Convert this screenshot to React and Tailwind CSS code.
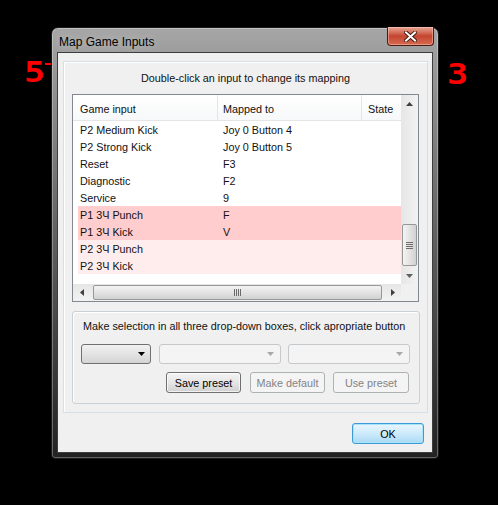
import React from 'react';

const rows = [
  { input: 'P2 Medium Kick', mapped: 'Joy 0 Button 4', bg: 'bg-white' },
  { input: 'P2 Strong Kick', mapped: 'Joy 0 Button 5', bg: 'bg-white' },
  { input: 'Reset', mapped: 'F3', bg: 'bg-white' },
  { input: 'Diagnostic', mapped: 'F2', bg: 'bg-white' },
  { input: 'Service', mapped: '9', bg: 'bg-white' },
  { input: 'P1 3Ч Punch', mapped: 'F', bg: 'bg-[#ffcdcd]' },
  { input: 'P1 3Ч Kick', mapped: 'V', bg: 'bg-[#ffcdcd]' },
  { input: 'P2 3Ч Punch', mapped: '', bg: 'bg-[#ffeded]' },
  { input: 'P2 3Ч Kick', mapped: '', bg: 'bg-[#ffeded]' },
];

// small scrollbar / combo arrows
function Tri({ dir, color = '#3f3f3f' }) {
  if (dir === 'up') return <svg width="7" height="4"><polygon points="3.5,0 7,4 0,4" fill={color} /></svg>;
  if (dir === 'down') return <svg width="7" height="4"><polygon points="0,0 7,0 3.5,4" fill={color} /></svg>;
  if (dir === 'left') return <svg width="4" height="7"><polygon points="4,0 4,7 0,3.5" fill={color} /></svg>;
  return <svg width="4" height="7"><polygon points="0,0 4,3.5 0,7" fill={color} /></svg>;
}

function CloseButton() {
  return (
    <div className="ml-auto -mt-px mr-[4px] w-[47px] h-[19px] rounded-b-[4px] border border-t-0 border-[#4a1b12] bg-gradient-to-b from-[#e8a899] via-[#c5442f] to-[#d66a51] shadow-[inset_0_0_0_1px_rgba(255,210,200,0.45)] flex items-center justify-center">
      <svg width="13" height="11" viewBox="0 0 13 11">
        <path d="M2 1.5 L11 9.5 M11 1.5 L2 9.5" stroke="#3a1510" strokeWidth="3.8" strokeLinecap="square" />
        <path d="M2 1.5 L11 9.5 M11 1.5 L2 9.5" stroke="#ffffff" strokeWidth="2" strokeLinecap="square" />
      </svg>
    </div>
  );
}

function Combo({ enabled, width }) {
  if (enabled) {
    return (
      <div className={`${width} h-[20px] rounded-[3px] border border-[#707070] bg-gradient-to-b from-[#f2f2f2] to-[#d4d4d4] flex items-center justify-end pr-[5px]`}>
        <Tri dir="down" color="#000000" />
      </div>
    );
  }
  return (
    <div className={`${width} h-[20px] rounded-[3px] border border-[#c5c9cc] bg-[#f4f4f4] flex items-center justify-end pr-[6px]`}>
      <Tri dir="down" color="#a8a8a8" />
    </div>
  );
}

function Button({ label, enabled, width }) {
  if (enabled) {
    return (
      <div className={`${width} h-[21px] rounded-[3px] border border-[#707070] bg-gradient-to-b from-[#f4f4f4] via-[#e6e6e6] to-[#d0d0d0] shadow-[inset_0_0_0_1px_rgba(255,255,255,0.7)] flex items-center justify-center text-[#000]`}>
        {label}
      </div>
    );
  }
  return (
    <div className={`${width} h-[21px] rounded-[3px] border border-[#adb2b5] bg-[#f4f4f4] flex items-center justify-center text-[#838383]`}>
      {label}
    </div>
  );
}

function ListView() {
  return (
    <div className="ml-[8px] mt-[9px] w-[347px] h-[208px] border border-[#828790] bg-white flex flex-col">
      <div className="flex h-[189px]">
        <div className="w-[328px] flex flex-col">
          <div className="h-[26px] flex border-b border-[#e5e5e5] bg-gradient-to-b from-white to-[#f7f8f9]">
            <div className="w-[145px] border-r border-[#e5e5e5] pl-[7px] pt-[3px] flex items-center">Game input</div>
            <div className="w-[144px] border-r border-[#e5e5e5] pl-[5px] pt-[3px] flex items-center">Mapped to</div>
            <div className="flex-1 pl-[6px] pt-[3px] flex items-center">State</div>
          </div>
          {rows.map((r) => (
            <div key={r.input} className={`ml-[5px] h-[17px] flex items-center ${r.bg}`}>
              <div className="w-[140px] pl-[2px] whitespace-nowrap">{r.input}</div>
              <div className="w-[143px] pl-[5px] whitespace-nowrap">{r.mapped}</div>
              <div className="flex-1"></div>
            </div>
          ))}
        </div>
        {/* vertical scrollbar */}
        <div className="w-[17px] flex flex-col bg-gradient-to-r from-[#e6e6e6] to-[#f2f2f2]">
          <div className="h-[17px] flex items-center justify-center"><Tri dir="up" /></div>
          <div className="flex-1 flex flex-col">
            <div className="mt-[112px] ml-px w-[15px] h-[42px] rounded-[2px] border border-[#979797] bg-gradient-to-r from-[#f4f4f4] via-[#e3e3e3] to-[#d1d1d1] flex flex-col items-center justify-center gap-[1px]">
              <div className="w-[7px] h-px bg-[#6b6b6b]" />
              <div className="w-[7px] h-px bg-[#6b6b6b]" />
              <div className="w-[7px] h-px bg-[#6b6b6b]" />
              <div className="w-[7px] h-px bg-[#6b6b6b]" />
            </div>
          </div>
          <div className="h-[17px] flex items-center justify-center"><Tri dir="down" color="#606060" /></div>
        </div>
      </div>
      {/* horizontal scrollbar */}
      <div className="flex h-[17px]">
        <div className="w-[328px] flex bg-gradient-to-b from-[#e6e6e6] to-[#f2f2f2]">
          <div className="w-[17px] flex items-center justify-center"><Tri dir="left" /></div>
          <div className="flex-1 flex items-center">
            <div className="ml-[3px] w-[289px] h-[15px] rounded-[2px] border border-[#979797] bg-gradient-to-b from-[#f4f4f4] via-[#e3e3e3] to-[#d1d1d1] flex items-center justify-center gap-[1px]">
              <div className="w-px h-[7px] bg-[#6b6b6b]" />
              <div className="w-px h-[7px] bg-[#6b6b6b]" />
              <div className="w-px h-[7px] bg-[#6b6b6b]" />
              <div className="w-px h-[7px] bg-[#6b6b6b]" />
            </div>
          </div>
          <div className="w-[17px] flex items-center justify-center"><Tri dir="right" /></div>
        </div>
        <div className="w-[17px] bg-[#f0f0f0]" />
      </div>
    </div>
  );
}

export default function App() {
  return (
    <div className="relative w-[498px] h-[505px] bg-black overflow-hidden text-[10.8px] leading-[14px] text-[#111] [font-family:'Liberation_Sans',Arial,sans-serif]">
      {/* game screen behind the dialog */}
      <span className="absolute left-[24px] top-[56px] text-[28px] leading-[34px] font-bold text-[#ff0000] scale-x-[1.25] origin-left [font-family:'DejaVu_Sans_Mono',monospace]">5</span>
      <div className="absolute left-[45px] top-[63px] w-[6px] h-[2px] bg-[#ff0000]" />
      <span className="absolute left-[447px] top-[58px] text-[28px] leading-[34px] font-bold text-[#ff0000] scale-x-[1.25] origin-left [font-family:'DejaVu_Sans_Mono',monospace]">3</span>

      {/* dialog window */}
      <div className="absolute left-[51px] top-[27px] w-[388px] h-[432px] rounded-t-[7px] rounded-b-[4px] border border-[#1a1a1a] bg-gradient-to-b from-[#a6a6a6] via-[#5e5e5e] to-[#222222] shadow-[inset_0_0_0_1px_rgba(255,255,255,0.3)] flex flex-col">
        <div className="h-[24px] flex items-start">
          <div className="ml-[7px] mt-[7px] text-[12px] text-black [text-shadow:0_0_8px_rgba(255,255,255,0.55)]">Map Game Inputs</div>
          <CloseButton />
        </div>

        <div className="ml-[5px] w-[376px] h-[401px] border border-[#3e3e3e] bg-[#f0f0f0] flex flex-col">
          {/* inner panel */}
          <div className="ml-[5px] mt-[8px] w-[365px] h-[352px] border border-[#d5dfe5] shadow-[inset_1px_1px_0_#ffffff] flex flex-col">
            <div className="mt-[9px] text-center">Double-click an input to change its mapping</div>
            <ListView />

            <div className="ml-[8px] mt-[9px] w-[348px] h-[93px] rounded-[3px] border border-[#c9d1d6] shadow-[inset_1px_1px_0_#ffffff] flex flex-col">
              <div className="mt-[7px] pl-[10px] whitespace-nowrap">Make selection in all three drop-down boxes, click apropriate button</div>
              <div className="mt-[11px] ml-[8px] flex">
                <Combo enabled width="w-[70px]" />
                <div className="w-[8px]" />
                <Combo width="w-[122px]" />
                <div className="w-[7px]" />
                <Combo width="w-[122px]" />
              </div>
              <div className="mt-[8px] ml-[93px] flex">
                <Button enabled label="Save preset" width="w-[75px]" />
                <div className="w-[9px]" />
                <Button label="Make default" width="w-[75px]" />
                <div className="w-[8px]" />
                <Button label="Use preset" width="w-[76px]" />
              </div>
            </div>
          </div>

          <div className="mt-[10px] flex justify-end pr-[8px]">
            <div className="w-[72px] h-[21px] rounded-[3px] border border-[#3c9bd6] bg-gradient-to-b from-[#eaf6fd] via-[#cdeafb] to-[#a9daf5] shadow-[inset_0_0_0_1px_#a8e4fb] flex items-center justify-center text-black">OK</div>
          </div>
        </div>
      </div>
    </div>
  );
}
